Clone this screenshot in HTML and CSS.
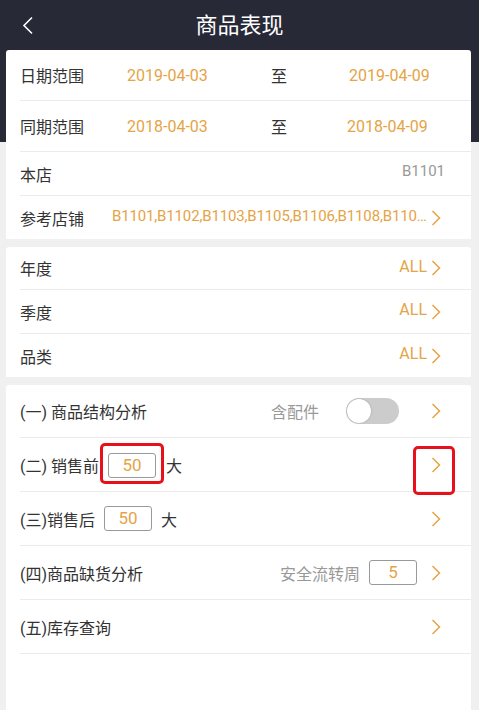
FILE: index.html
```html
<!DOCTYPE html>
<html lang="zh-CN">
<head>
    <meta charset="UTF-8">
    <meta name="viewport" content="width=device-width, initial-scale=1.0">
    <title>商品表现</title>
    <link rel="stylesheet" href="styles.css">
</head>
<body>
    <header class="top-bar">
        <button class="back-btn">
            <svg width="12" height="19" viewBox="0 0 12 19"><path d="M10 1.5 L2 9.5 L10 17.5" fill="none" stroke="#fff" stroke-width="1.6"/></svg>
        </button>
        <h1>商品表现</h1>
    </header>

    <!-- Date and store filters -->
    <section class="card card-dates">
        <div class="row row-date">
            <span class="label">日期范围</span>
            <span class="date">2019-04-03</span>
            <span class="to">至</span>
            <span class="date">2019-04-09</span>
        </div>
        <div class="row row-date">
            <span class="label">同期范围</span>
            <span class="date">2018-04-03</span>
            <span class="to">至</span>
            <span class="date date-alt">2018-04-09</span>
        </div>
        <div class="row row-short">
            <span class="label">本店</span>
            <span class="store">B1101</span>
        </div>
        <div class="row row-short row-last">
            <span class="label label-ref">参考店铺</span>
            <span class="ref-list">B1101,B1102,B1103,B1105,B1106,B1108,B1109,B1110</span>
            <svg class="chev" width="10" height="16" viewBox="0 0 10 16"><path d="M1.5 1 L8.5 8 L1.5 15" fill="none" stroke="#e5a445" stroke-width="1.5"/></svg>
        </div>
    </section>

    <!-- Product attribute filters -->
    <section class="card card-attrs">
        <div class="row row-short">
            <span class="label">年度</span>
            <span class="all">ALL</span>
            <svg class="chev" width="10" height="16" viewBox="0 0 10 16"><path d="M1.5 1 L8.5 8 L1.5 15" fill="none" stroke="#e5a445" stroke-width="1.5"/></svg>
        </div>
        <div class="row row-short">
            <span class="label">季度</span>
            <span class="all">ALL</span>
            <svg class="chev" width="10" height="16" viewBox="0 0 10 16"><path d="M1.5 1 L8.5 8 L1.5 15" fill="none" stroke="#e5a445" stroke-width="1.5"/></svg>
        </div>
        <div class="row row-short row-last">
            <span class="label">品类</span>
            <span class="all">ALL</span>
            <svg class="chev" width="10" height="16" viewBox="0 0 10 16"><path d="M1.5 1 L8.5 8 L1.5 15" fill="none" stroke="#e5a445" stroke-width="1.5"/></svg>
        </div>
    </section>

    <!-- Analysis entries -->
    <section class="card card-menu">
        <div class="row row-tall">
            <span class="label">(一) 商品结构分析</span>
            <span class="hint">含配件</span>
            <span class="switch"><span class="knob"></span></span>
            <svg class="chev" width="10" height="16" viewBox="0 0 10 16"><path d="M1.5 1 L8.5 8 L1.5 15" fill="none" stroke="#e5a445" stroke-width="1.5"/></svg>
        </div>
        <div class="row row-tall">
            <span class="label">(二) 销售前</span>
            <span class="mark mark-input"><span class="num-box">50</span></span>
            <span class="unit unit-tight">大</span>
            <svg class="chev chev-end" width="10" height="16" viewBox="0 0 10 16"><path d="M1.5 1 L8.5 8 L1.5 15" fill="none" stroke="#e5a445" stroke-width="1.5"/></svg>
            <span class="mark mark-chev"></span>
        </div>
        <div class="row row-tall">
            <span class="label">(三)销售后</span>
            <span class="num-box num-after">50</span>
            <span class="unit">大</span>
            <svg class="chev chev-end" width="10" height="16" viewBox="0 0 10 16"><path d="M1.5 1 L8.5 8 L1.5 15" fill="none" stroke="#e5a445" stroke-width="1.5"/></svg>
        </div>
        <div class="row row-tall">
            <span class="label">(四)商品缺货分析</span>
            <span class="hint">安全流转周</span>
            <span class="num-box num-week">5</span>
            <svg class="chev" width="10" height="16" viewBox="0 0 10 16"><path d="M1.5 1 L8.5 8 L1.5 15" fill="none" stroke="#e5a445" stroke-width="1.5"/></svg>
        </div>
        <div class="row row-tall">
            <span class="label">(五)库存查询</span>
            <svg class="chev chev-end" width="10" height="16" viewBox="0 0 10 16"><path d="M1.5 1 L8.5 8 L1.5 15" fill="none" stroke="#e5a445" stroke-width="1.5"/></svg>
        </div>
    </section>
</body>
</html>
```

FILE: styles.css
```css
body {
    margin: 0;
    padding: 0;
    font-family: Roboto, "Noto Sans CJK SC", sans-serif;
    font-size: 16px;
    color: #333;
    background: linear-gradient(#272937 0, #272937 142px, #f0f0f0 142px);
    min-height: 710px;
    overflow: hidden;
}
.top-bar {
    height: 50px;
    display: flex;
    align-items: center;
    justify-content: center;
    position: relative;
}
.top-bar h1 {
    margin: 0;
    font-size: 22px;
    font-weight: normal;
    color: #fff;
    line-height: 1;
    padding-top: 2px;
}
.back-btn {
    position: absolute;
    left: 22px;
    top: 16px;
    padding: 0;
    border: none;
    background: none;
    line-height: 0;
}

/* Cards */
.card {
    background: #fff;
    margin: 0 8px 8px 6px;
    padding-left: 14px;
    border-radius: 3px 3px 0 0;
}
.card-menu {
    min-height: 330px;
    margin-bottom: 0;
}
.row {
    display: flex;
    align-items: center;
    box-sizing: border-box;
    border-bottom: 1px solid #ebebeb;
    padding-right: 30px;
    position: relative;
    white-space: nowrap;
}
.row-last {
    border-bottom: none;
}
.row-date {
    height: 51px;
}
.row-short {
    height: 44px;
}
.card-dates .row-last,
.card-attrs .row:first-child,
.card-attrs .row-last {
    height: 43px;
}
.row-tall {
    height: 54px;
}
.card-menu .row:first-child {
    height: 53px;
}
.label {
    flex: none;
}
.row-date .label {
    width: 107px;
}
.date {
    color: #e5a445;
    width: 144px;
}
.date + .to + .date {
    width: auto;
}
.to {
    width: 78px;
}
.date-alt {
    margin-left: -2px;
}
.store {
    margin-left: auto;
    margin-right: -4px;
    color: #999;
    font-size: 15px;
    margin-bottom: 5px;
}
.label-ref {
    width: 92px;
}
.ref-list {
    color: #e5a445;
    font-size: 15px;
    overflow: hidden;
    text-overflow: ellipsis;
    flex: 1;
    min-width: 0;
    margin-right: 3px;
    margin-bottom: 4px;
    letter-spacing: -0.15px;
}
.all {
    margin-left: auto;
    color: #e5a445;
    margin-right: 4px;
    margin-bottom: 4px;
}
.chev {
    flex: none;
    display: block;
}
.chev-end {
    margin-left: auto;
}

/* Switch */
.hint {
    margin-left: auto;
    color: #999;
}
.switch {
    width: 53px;
    height: 26px;
    border-radius: 13px;
    background: #ccc;
    margin-left: 27px;
    margin-right: 32px;
    position: relative;
    flex: none;
}
.knob {
    position: absolute;
    left: 1px;
    top: 1px;
    width: 24px;
    height: 24px;
    border-radius: 50%;
    background: #fff;
    box-shadow: 0 0 2px rgba(0, 0, 0, 0.25);
}

/* Number inputs */
.num-box {
    display: inline-block;
    box-sizing: border-box;
    width: 48px;
    height: 25px;
    line-height: 23px;
    border: 1px solid #999;
    border-radius: 3px;
    color: #e5a445;
    font-size: 17px;
    text-align: center;
}
.num-after {
    margin-left: 9px;
}
.num-week {
    margin-left: 9px;
    margin-right: 14px;
}
.unit {
    margin-left: 9px;
}
.unit-tight {
    margin-left: 2px;
}

/* Red highlight marks */
.mark {
    border: 3px solid #e8101b;
    border-radius: 5px;
    box-sizing: border-box;
}
.mark-input {
    display: inline-block;
    width: 64px;
    height: 41px;
    padding: 7px 5px 3px;
    margin-left: 1px;
    margin-top: -2px;
}
.mark-input .num-box {
    display: block;
}
.mark-chev {
    position: absolute;
    right: 16px;
    top: 8px;
    width: 42px;
    height: 49px;
}
```
